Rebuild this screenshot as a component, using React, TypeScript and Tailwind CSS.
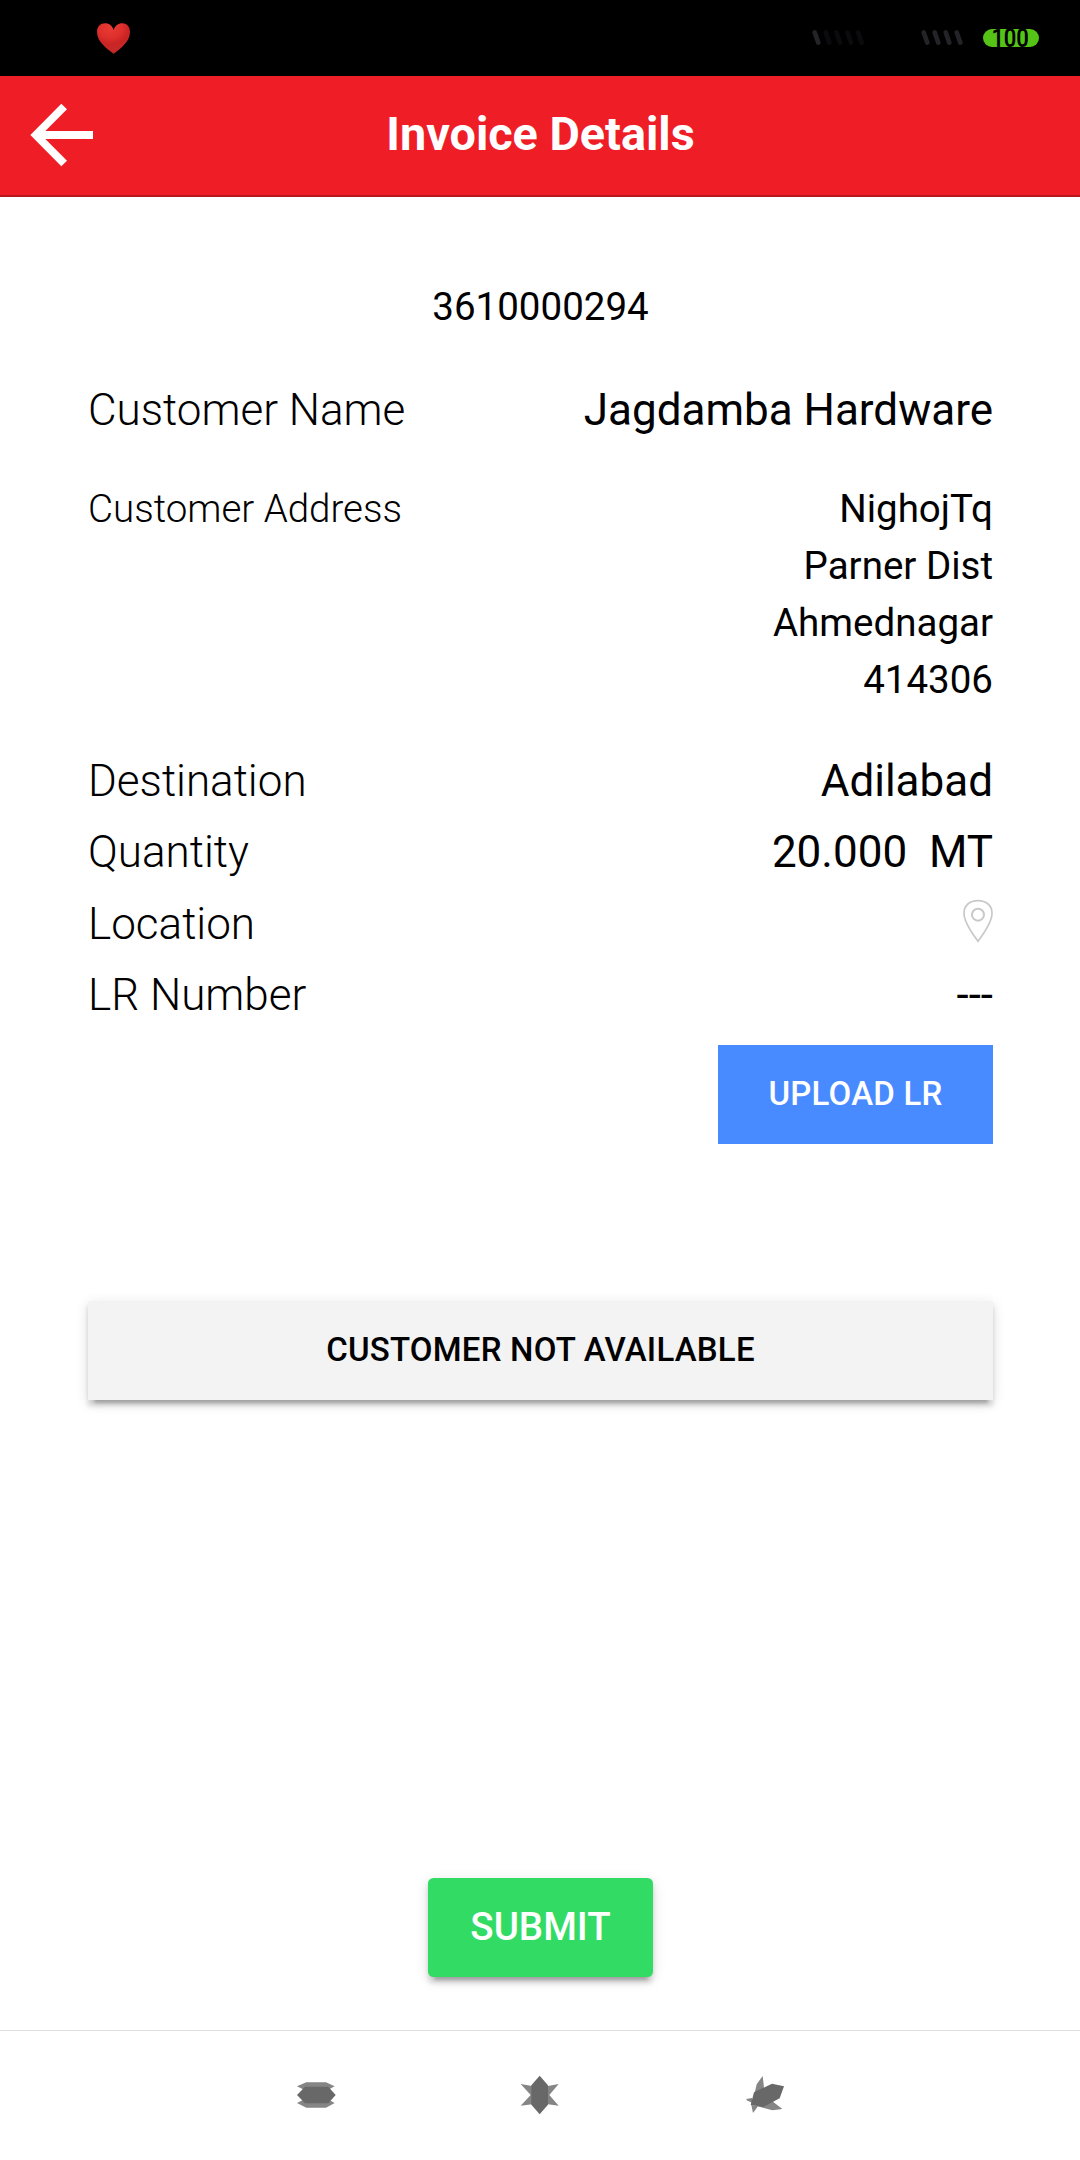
import type { ReactNode } from "react";

function StatusBar() {
  return (
    <div className="flex h-[76px] items-center bg-black">
      <svg className="ml-[96px] mt-px h-[34px] w-[36px]" viewBox="0 0 108 102">
        <defs>
          <radialGradient id="heart" cx="0.4" cy="0.12" r="0.75">
            <stop offset="0" stopColor="#ec3b35" />
            <stop offset="0.5" stopColor="#dd2f2c" />
            <stop offset="0.75" stopColor="#c92423" />
            <stop offset="1" stopColor="#c62828" />
          </radialGradient>
        </defs>
        <path
          d="M53 95C36 82 3 61 3 30C3 13 14 4 27 4C40 4 49 12 53 24C57 12 66 4 79 4C92 4 102 13 102 30C102 61 70 82 53 95Z"
          fill="url(#heart)"
        />
      </svg>
      <svg className="ml-[673px] mt-[-2px] h-[24px] w-[60px]" viewBox="0 0 180 72" fill="none" strokeLinecap="round" strokeWidth="14">
        <path d="M29 22L40 53" stroke="#232328" />
        <path d="M62 22L73 53M94 22L105 53M127 22L138 53M159 22L170 53" stroke="#0b0b0d" />
      </svg>
      <svg className="ml-[53px] mt-[-2px] h-[24px] w-[54px]" viewBox="0 0 162 72" fill="none" strokeLinecap="round" strokeWidth="14" stroke="#232328">
        <path d="M17 22L28 53M50 22L61 53M83 22L94 53M116 22L127 53" />
      </svg>
      <div className="ml-[11px] flex h-[18px] w-[56px] items-center justify-center rounded-full bg-[#55c416] font-['Roboto'] text-[22px] leading-[28px] font-semibold tracking-[-0.3px] text-black">
        <span className="relative top-px left-[-1px] scale-y-120">100</span>
      </div>
    </div>
  );
}

function Header() {
  return (
    <header className="relative flex h-[121px] items-center justify-center border-b-2 border-[#b8171e] bg-[#ef1e26]">
      <button className="absolute left-[30px] top-[27px]" aria-label="Back">
        <svg className="h-[64px] w-[64px]" viewBox="0 0 192 192" fill="#fff">
          <path d="M94 2L111 19L46 84H189V108H46L111 173L94 190L1 96Z" />
        </svg>
      </button>
      <h1 className="relative top-[-2px] left-[0.5px] text-[46.75px] leading-[56px] font-bold text-white">Invoice Details</h1>
    </header>
  );
}

function Row({ label, children }: { label: string; children: ReactNode }) {
  return (
    <div className="flex h-[71.5px] items-center justify-between text-[44px] leading-[71.5px]">
      <span className="font-light">{label}</span>
      {children}
    </div>
  );
}

function PinIcon() {
  return (
    <svg className="relative top-[-3px] h-[44px] w-[30px]" viewBox="0 0 90 132" fill="none" stroke="#c8c8c8" strokeWidth="5">
      <path d="M45 127C35 113 3 73 3 43C3 19 20 5 45 5C70 5 87 19 87 43C87 73 55 113 45 127Z" />
      <circle cx="45" cy="47" r="18" strokeWidth="6" />
    </svg>
  );
}

function NavBar() {
  return (
    <nav className="flex h-[130px] items-center justify-center border-t border-[#dedede] pb-[2px]">
      <div className="flex w-[489px] justify-between">
        <svg className="h-[40px] w-[40px]" viewBox="0 0 120 120">
          <path d="M3 34L31 22H90L116 34L90 48H31ZM3 84L31 70H90L116 84L90 98H31Z" fill="#858585" />
          <path d="M3 60L27 35H97L119 60L97 85H27Z" fill="#686868" />
        </svg>
        <svg className="h-[40px] w-[40px]" viewBox="0 0 120 120">
          <path d="M2 27L36 33L60 38L84 33L116 27L88 60L116 92L84 88L60 82L36 88L2 92L32 60Z" fill="#858585" />
          <path d="M59 2L84 31V89L59 118L34 89V31Z" fill="#686868" />
        </svg>
        <svg className="h-[40px] w-[40px]" viewBox="0 0 120 120">
          <path d="M53 3L57 38L36 61L29 54L35 28ZM4 72L21 69L24 91L18 82L5 76ZM19 90L39 94L24 114ZM38 94L84 80L112 102L82 106Z" fill="#858585" />
          <path d="M27 52L81 26L117 34L104 70L55 96L17 90Z" fill="#686868" />
        </svg>
      </div>
    </nav>
  );
}

export default function App() {
  return (
    <div className="flex h-[2160px] w-[1080px] flex-col bg-white font-['Roboto',sans-serif] text-black">
      <StatusBar />
      <Header />
      <main className="flex flex-1 flex-col pl-[88px] pr-[87px]">
        <p className="mt-[79px] h-[62px] text-center text-[38.5px] leading-[62px]">3610000294</p>
        <div className="mt-[37px]">
          <Row label="Customer Name">
            <span>Jagdamba Hardware</span>
          </Row>
        </div>
        <div className="mt-[33px] flex h-[228px] justify-between text-[38.5px] leading-[57px]">
          <span className="font-light">Customer Address</span>
          <span className="w-[270px] text-right">NighojTq Parner Dist Ahmednagar 414306</span>
        </div>
        <div className="mt-[38px]">
          <Row label="Destination">
            <span>Adilabad</span>
          </Row>
          <Row label="Quantity">
            <span className="whitespace-pre">20.000  MT</span>
          </Row>
          <Row label="Location">
            <PinIcon />
          </Row>
          <Row label="LR Number">
            <span>---</span>
          </Row>
        </div>
        <button className="mt-[13px] h-[99px] w-[275px] self-end bg-[#488aff] text-[33px] font-medium tracking-[0.2px] text-white">
          UPLOAD LR
        </button>
        <button className="mt-[157px] h-[99px] w-full rounded-t-[2px] bg-[#f3f3f3] text-[33px] font-medium tracking-[0.2px] shadow-[0_8.5px_3px_-5.5px_rgba(0,0,0,0.2),0_5.5px_5.5px_0_rgba(0,0,0,0.14),0_3px_14px_0_rgba(0,0,0,0.12)]">
          CUSTOMER NOT AVAILABLE
        </button>
        <button className="mt-auto mb-[53px] h-[99px] w-[225px] self-center rounded-[5.5px] bg-[#32db64] pb-[2px] text-[38.5px] font-medium text-white shadow-[0_8.5px_3px_-5.5px_rgba(0,0,0,0.2),0_5.5px_5.5px_0_rgba(0,0,0,0.14),0_3px_14px_0_rgba(0,0,0,0.12)]">
          SUBMIT
        </button>
      </main>
      <NavBar />
    </div>
  );
}
